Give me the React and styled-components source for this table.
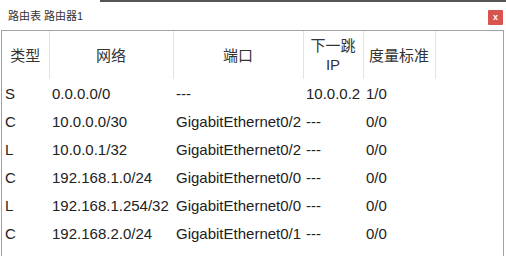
import React from "react";
import styled, { createGlobalStyle } from "styled-components";

const GlobalStyle = createGlobalStyle`
    html, body {
        margin: 0;
        padding: 0;
        background: #fff;
        overflow: hidden;
    }
    body {
        font-family: "Liberation Sans", "Noto Sans CJK SC", sans-serif;
    }
`;

const Window = styled.div`
    width: 506px;
    height: 256px;
    background: #fff;
    overflow: hidden;
    display: flex;
    flex-direction: column;
`;

const TopEdge = styled.div`
    height: 2px;
    flex-shrink: 0;
    background: linear-gradient(to right, #fff 0, #fff 100px, #555 100px);
`;

const TitleBar = styled.div`
    height: 28px;
    flex-shrink: 0;
    display: flex;
    align-items: center;
    justify-content: space-between;
    padding: 0 3px 0 8px;
`;

const Title = styled.span`
    font-size: 11px;
    color: #333;
    line-height: 14px;
`;

const CloseButton = styled.button`
    width: 15px;
    height: 15px;
    margin-top: 3px;
    padding: 0;
    border: none;
    border-radius: 1px;
    background: #d9534f;
    color: #fff;
    font-family: "Liberation Sans", sans-serif;
    font-size: 9px;
    font-weight: bold;
    line-height: 15px;
    text-align: center;
`;

const Panel = styled.div`
    flex: 1;
    margin: 0 2px 0 1px;
    border: 1px solid #a3a3a3;
    border-bottom: none;
    overflow: hidden;
`;

const Table = styled.table`
    border-collapse: collapse;
    table-layout: fixed;
    width: 100%;
`;

const HeadCell = styled.th`
    height: 48px;
    padding: 0;
    font-weight: normal;
    font-size: 15px;
    line-height: 19px;
    color: #333;
    text-align: center;
    vertical-align: middle;
    border-right: ${({ $last }) => ($last ? "none" : "1px solid #e3e3e3")};
`;

const Cell = styled.td`
    height: 28px;
    padding: 0 0 0 3px;
    font-size: 15px;
    color: #222;
    white-space: nowrap;
    overflow: hidden;
    vertical-align: middle;
`;

const columns = [
    { label: "类型", width: 47 },
    { label: "网络", width: 124 },
    { label: "端口", width: 130 },
    { label: <>下一跳<br />IP</>, width: 60 },
    { label: "度量标准", width: 72 },
];

const routes = [
    ["S", "0.0.0.0/0", "---", "10.0.0.2", "1/0"],
    ["C", "10.0.0.0/30", "GigabitEthernet0/2", "---", "0/0"],
    ["L", "10.0.0.1/32", "GigabitEthernet0/2", "---", "0/0"],
    ["C", "192.168.1.0/24", "GigabitEthernet0/0", "---", "0/0"],
    ["L", "192.168.1.254/32", "GigabitEthernet0/0", "---", "0/0"],
    ["C", "192.168.2.0/24", "GigabitEthernet0/1", "---", "0/0"],
    ["L", "192.168.2.254/32", "GigabitEthernet0/1", "---", "0/0"],
];

export default function App() {
    return (
        <>
            <GlobalStyle />
            <Window>
                <TopEdge />
                <TitleBar>
                    <Title>路由表 路由器1</Title>
                    <CloseButton>x</CloseButton>
                </TitleBar>
                <Panel>
                    <Table>
                        <colgroup>
                            {columns.map((c, i) => (
                                <col key={i} style={{ width: c.width }} />
                            ))}
                            <col />
                        </colgroup>
                        <thead>
                            <tr>
                                {columns.map((c, i) => (
                                    <HeadCell key={i}>{c.label}</HeadCell>
                                ))}
                                <HeadCell $last />
                            </tr>
                        </thead>
                        <tbody>
                            {routes.map((r, i) => (
                                <tr key={i}>
                                    {r.map((v, j) => (
                                        <Cell key={j}>{v}</Cell>
                                    ))}
                                    <Cell />
                                </tr>
                            ))}
                        </tbody>
                    </Table>
                </Panel>
            </Window>
        </>
    );
}
